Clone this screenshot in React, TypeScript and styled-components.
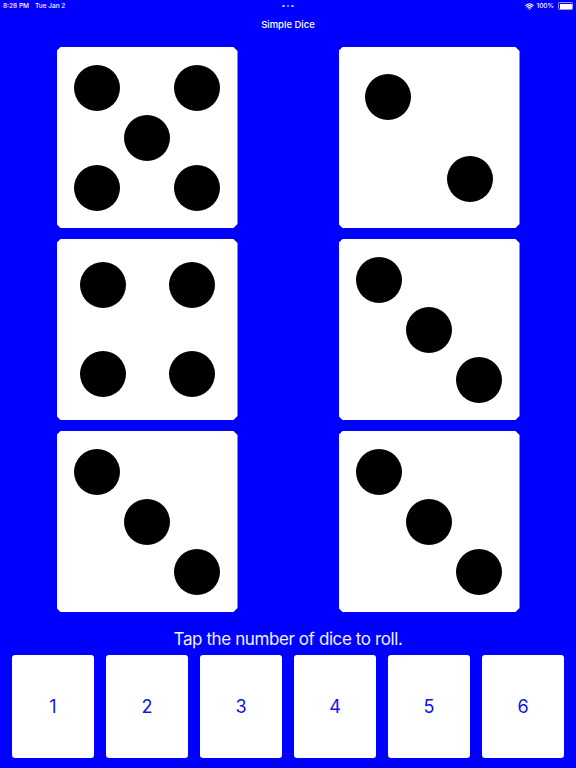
import React from 'react';
import styled, { createGlobalStyle } from 'styled-components';
import { Wifi } from 'lucide-react';

const GlobalStyle = createGlobalStyle`
  html, body {
    margin: 0;
    padding: 0;
    background: #0000ff;
  }
  body {
    font-family: Inter, "Liberation Sans", sans-serif;
  }
`;

type Pip = [number, number];

interface FaceDef {
  cols: number;
  cell: number;
  pips: Pip[];
}

const faces: Record<number, FaceDef> = {
  2: { cols: 2, cell: 82, pips: [[1, 1], [2, 2]] },
  3: { cols: 3, cell: 50, pips: [[1, 1], [2, 2], [3, 3]] },
  4: { cols: 2, cell: 89, pips: [[1, 1], [1, 2], [2, 1], [2, 2]] },
  5: { cols: 3, cell: 50, pips: [[1, 1], [1, 3], [2, 2], [3, 1], [3, 3]] },
};

const rolled = [5, 2, 4, 3, 3, 3];

const App = () => {
  return (
    <>
      <GlobalStyle />
      <Screen>
        <StatusBar>
          <StatusLeft>
            <span>8:28 PM</span>
            <span>Tue Jan 2</span>
          </StatusLeft>
          <Grabber>
            <i />
            <i />
            <i />
          </Grabber>
          <StatusRight>
            <Wifi size={9} strokeWidth={3} />
            <span>100%</span>
            <Battery>
              <BatteryFill />
            </Battery>
          </StatusRight>
        </StatusBar>
        <NavTitle>Simple Dice</NavTitle>
        <DiceGrid>
          {rolled.map((value, i) => {
            const face = faces[value];
            return (
              <Die key={i} cols={face.cols} cell={face.cell}>
                {face.pips.map(([r, c], j) => (
                  <Dot key={j} style={{ gridRow: r, gridColumn: c }} />
                ))}
              </Die>
            );
          })}
        </DiceGrid>
        <Prompt>Tap the number of dice to roll.</Prompt>
        <ButtonRow>
          {[1, 2, 3, 4, 5, 6].map((n) => (
            <CountButton key={n}>{n}</CountButton>
          ))}
        </ButtonRow>
      </Screen>
    </>
  );
};

export default App;

const Screen = styled.div`
  width: 576px;
  height: 768px;
  background: #0000ff;
  display: flex;
  flex-direction: column;
  align-items: center;
  overflow: hidden;
`;

const StatusBar = styled.div`
  width: 100%;
  box-sizing: border-box;
  height: 12px;
  padding: 0 3px 0 3px;
  display: flex;
  align-items: center;
  justify-content: space-between;
  color: #ffffff;
  font-size: 6.5px;
  font-weight: 500;
`;

const StatusLeft = styled.div`
  display: flex;
  gap: 6px;
  width: 80px;
`;

const Grabber = styled.div`
  display: flex;
  gap: 2px;

  i {
    width: 2.5px;
    height: 2.5px;
    border-radius: 50%;
    background: rgba(255, 255, 255, 0.7);
  }
`;

const StatusRight = styled.div`
  display: flex;
  align-items: center;
  justify-content: flex-end;
  gap: 2px;
  width: 80px;
`;

const Battery = styled.div`
  margin-left: 2px;
  width: 12px;
  height: 5px;
  border: 1px solid rgba(255, 255, 255, 0.6);
  border-radius: 1.5px;
  padding: 0.5px;
  box-sizing: content-box;
  display: flex;
`;

const BatteryFill = styled.div`
  flex: 1;
  background: #ffffff;
  border-radius: 0.5px;
`;

const NavTitle = styled.div`
  margin-top: 7px;
  height: 12px;
  line-height: 12px;
  color: #ffffff;
  font-size: 9.5px;
  font-weight: 500;
`;

const DiceGrid = styled.div`
  margin-top: 16px;
  display: grid;
  grid-template-columns: 181px 181px;
  column-gap: 101px;
  row-gap: 11px;
`;

const Die = styled.div<{ cols: number; cell: number }>`
  width: 181px;
  height: 181px;
  box-sizing: border-box;
  background: #ffffff;
  clip-path: polygon(4px 0, calc(100% - 4px) 0, 100% 4px, 100% calc(100% - 4px), calc(100% - 4px) 100%, 4px 100%, 0 calc(100% - 4px), 0 4px);
  display: grid;
  grid-template-columns: repeat(${(p) => p.cols}, ${(p) => p.cell}px);
  grid-template-rows: repeat(${(p) => p.cols}, ${(p) => p.cell}px);
  align-content: center;
  justify-content: center;
`;

const Dot = styled.div`
  width: 46px;
  height: 46px;
  border-radius: 50%;
  background: #000000;
  place-self: center;
`;

const Prompt = styled.div`
  margin-top: 16px;
  color: #f0f0ff;
  font-size: 17px;
  letter-spacing: -0.4px;
  line-height: 22px;
`;

const ButtonRow = styled.div`
  margin-top: 5px;
  display: flex;
  gap: 12px;
`;

const CountButton = styled.button`
  width: 82px;
  height: 103px;
  border: none;
  border-radius: 3px;
  background: #ffffff;
  color: #1010f0;
  font-family: Inter, "Liberation Sans", sans-serif;
  font-size: 18px;
  padding: 0;
`;
